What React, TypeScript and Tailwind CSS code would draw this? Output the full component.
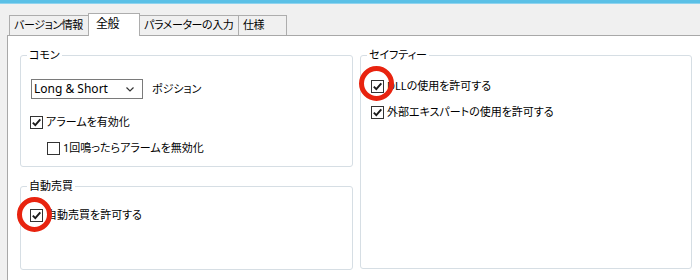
import React from "react";

const font = "font-['Noto_Sans','Noto_Sans_CJK_JP',sans-serif] [font-feature-settings:'palt'] text-[11px] text-black";

const Check = ({ checked }: { checked?: boolean }) => (
  <span className="w-[13px] h-[13px] border border-[#333333] bg-white flex items-center justify-center shrink-0">
    {checked && (
      <svg width="11" height="11" viewBox="0 0 11 11">
        <path d="M1.8 5.6 L4.3 8.2 L9.3 2.4" fill="none" stroke="#1a1a1a" strokeWidth="1.9" />
      </svg>
    )}
  </span>
);

const CheckRow = ({ label, checked, className }: { label: string; checked?: boolean; className: string }) => (
  <div className={`flex items-center h-[16px] ${className}`}>
    <Check checked={checked} />
    <span className="ml-[3px] leading-[16px] whitespace-nowrap">{label}</span>
  </div>
);

const Group = ({ title, className, children }: { title: string; className: string; children?: React.ReactNode }) => (
  <fieldset className={`border border-[#d6dee4] rounded-[3px] ${className}`}>
    <legend className="ml-[6px] px-[2px] leading-[14px]">{title}</legend>
    {children}
  </fieldset>
);

const tabs = ["バージョン情報", "全般", "パラメーターの入力", "仕様"];
const tabWidths = ["w-[80px]", "w-[52px]", "w-[100px]", "w-[49px]"];

export default function App() {
  return (
    <div className={`relative w-[700px] h-[280px] overflow-hidden bg-[#f0f0f0] flex flex-col ${font}`}>
      <div className="h-[4px] bg-[#5bc0e6] border-b border-[#8fd3ee]" />
      <div className="h-[31px] flex items-end pl-[9px] text-[11px] tracking-[-0.4px]">
        {tabs.map((t, i) =>
          i === 1 ? (
            <div
              key={t}
              className={`${tabWidths[i]} -ml-px h-[23px] -mb-px relative z-10 bg-white border-l border-t border-r border-[#adadad] flex items-center pl-[7px] pb-[3px] whitespace-nowrap text-[12px]`}
            >
              {t}
            </div>
          ) : (
            <div
              key={t}
              className={`${tabWidths[i]} ${i > 0 ? "-ml-px" : ""} h-[20px] bg-[#f0f0f0] border-l border-t border-r border-[#adadad] flex items-center pl-[4px] whitespace-nowrap`}
            >
              {t}
            </div>
          )
        )}
      </div>
      <div className="flex-1 ml-[7px] bg-white border-l border-t border-[#a8a8a8] pl-[12px] pt-[12px] flex gap-[7px] items-start">
        <div className="w-[333px] flex flex-col gap-[12px]">
          <Group title="コモン" className="h-[119px]">
            <div className="flex items-center mt-[17px] ml-[10px]">
              <div className="w-[112px] h-[20px] border border-[#7a7a7a] bg-white flex items-center justify-between pl-[2px] pr-[8px]">
                <span className="leading-[16px] text-[12px]">Long &amp; Short</span>
                <svg width="8" height="5" viewBox="0 0 8 5">
                  <path d="M0.5 0.5 L4 4 L7.5 0.5" fill="none" stroke="#333" strokeWidth="1.2" />
                </svg>
              </div>
              <span className="ml-[9px]">ポジション</span>
            </div>
            <CheckRow label="アラームを有効化" checked className="mt-[15px] ml-[9px]" />
            <CheckRow label="1回鳴ったらアラームを無効化" className="mt-[10px] ml-[26px]" />
          </Group>
          <Group title="自動売買" className="h-[91px]">
            <CheckRow label="自動売買を許可する" checked className="mt-[14px] ml-[9px]" />
          </Group>
        </div>
        <Group title="セイフティー" className="w-[332px] h-[221px]">
          <CheckRow label="DLLの使用を許可する" checked className="mt-[16px] ml-[10px]" />
          <CheckRow label="外部エキスパートの使用を許可する" checked className="mt-[10px] ml-[10px]" />
        </Group>
      </div>
      <div className="absolute left-[17px] top-[197px] w-[35px] h-[35px] rounded-full border-[5px] border-[#e8230f]" />
      <div className="absolute left-[359px] top-[66px] w-[35px] h-[35px] rounded-full border-[5px] border-[#e8230f]" />
    </div>
  );
}
